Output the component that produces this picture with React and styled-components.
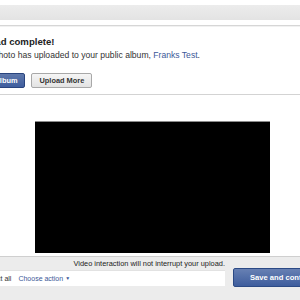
import React from "react";
import styled, { createGlobalStyle } from "styled-components";

const Global = createGlobalStyle`
  html, body { margin: 0; padding: 0; background: #fff; overflow: hidden; }
  body { font-family: "Liberation Sans", Arial, sans-serif; color: #333; }
`;

const Page = styled.div`
  width: 356px;
  margin-left: -26px;
  padding-top: 5px;
`;

const TopBand = styled.div`
  height: 15px;
  background: linear-gradient(#ececec, #e3e3e3);
  margin-bottom: 5px;
`;

const Panel = styled.section`
  border-top: 1px solid #d6d6d6;
  border-bottom: 1px solid #d3d3d3;
  box-shadow: 0 1px 0 #f1f1f1 inset;
  padding: 10px 0 6px 0;
`;

const Heading = styled.h1`
  margin: 0;
  font-size: 9.6px;
  line-height: 12px;
  font-weight: bold;
  color: #222;
`;

const Message = styled.p`
  margin: 2px 0 0;
  font-size: 8.6px;
  line-height: 10px;
  color: #333;
`;

const Link = styled.a`
  color: #3b5998;
  text-decoration: none;
`;

const ButtonRow = styled.div`
  display: flex;
  gap: 6px;
  margin-top: 13px;
  margin-left: -6px;
`;

const Button = styled.button`
  height: 15px;
  padding: 0 7px;
  font-family: inherit;
  font-size: 7.4px;
  font-weight: bold;
  line-height: 13px;
  border-radius: 2px;
  border: 1px solid ${(p) => (p.$primary ? "#29447e" : "#a8a8a8")};
  background: ${(p) =>
    p.$primary
      ? "linear-gradient(#5f78ab, #3f5e9e)"
      : "linear-gradient(#f5f5f5, #e3e3e3)"};
  color: ${(p) => (p.$primary ? "#fff" : "#333")};
`;

const VideoWrap = styled.div`
  display: flex;
  justify-content: center;
  padding-top: 26px;
  padding-bottom: 3px;
`;

const Video = styled.div`
  width: 235px;
  height: 131px;
  background: #000;
  border-top: 1px solid #8c8c8c;
`;

const BottomBar = styled.div`
  border-top: 1px solid #cfcfcf;
  background: #ececec;
  height: 44px;
  padding: 2px 7px 0 0;
  display: grid;
  grid-template-columns: 1fr 90px;
  grid-template-rows: 9px 19px;
  column-gap: 8px;
  align-items: center;
`;

const Notice = styled.div`
  grid-column: 1;
  text-align: right;
  font-size: 7.4px;
  line-height: 9px;
  color: #222;
`;

const Field = styled.div`
  grid-column: 1;
  height: 15px;
  background: #fff;
  border-top: 1px solid #e2e2e2;
  display: flex;
  align-items: center;
  gap: 7px;
  padding-left: 9px;
  font-size: 7px;
  color: #333;
`;

const ActionLink = styled.span`
  color: #3b5998;
  display: inline-flex;
  align-items: center;
  gap: 2px;
`;

const Arrow = styled.span`
  font-size: 5px;
`;

const SaveButton = styled.button`
  grid-column: 2;
  height: 19px;
  padding: 0 0 0 16px;
  text-align: left;
  font-family: inherit;
  font-size: 7.6px;
  font-weight: bold;
  color: #fff;
  border: 1px solid #2c4a85;
  border-radius: 2px;
  background: linear-gradient(#6780b3, #3e5d9d);
  white-space: nowrap;
`;

export default function App() {
  return (
    <>
      <Global />
      <Page>
        <TopBand />
        <Panel>
          <Heading>Upload complete!</Heading>
          <Message>
            Your photo has uploaded to your public album, <Link>Franks Test</Link>.
          </Message>
          <ButtonRow>
            <Button $primary>View Album</Button>
            <Button>Upload More</Button>
          </ButtonRow>
        </Panel>
        <VideoWrap>
          <Video />
        </VideoWrap>
        <BottomBar>
          <Notice>Video interaction will not interrupt your upload.</Notice>
          <span />
          <Field>
            <span>Select all</span>
            <ActionLink>
              Choose action <Arrow>▼</Arrow>
            </ActionLink>
          </Field>
          <SaveButton>Save and continue</SaveButton>
        </BottomBar>
      </Page>
    </>
  );
}
